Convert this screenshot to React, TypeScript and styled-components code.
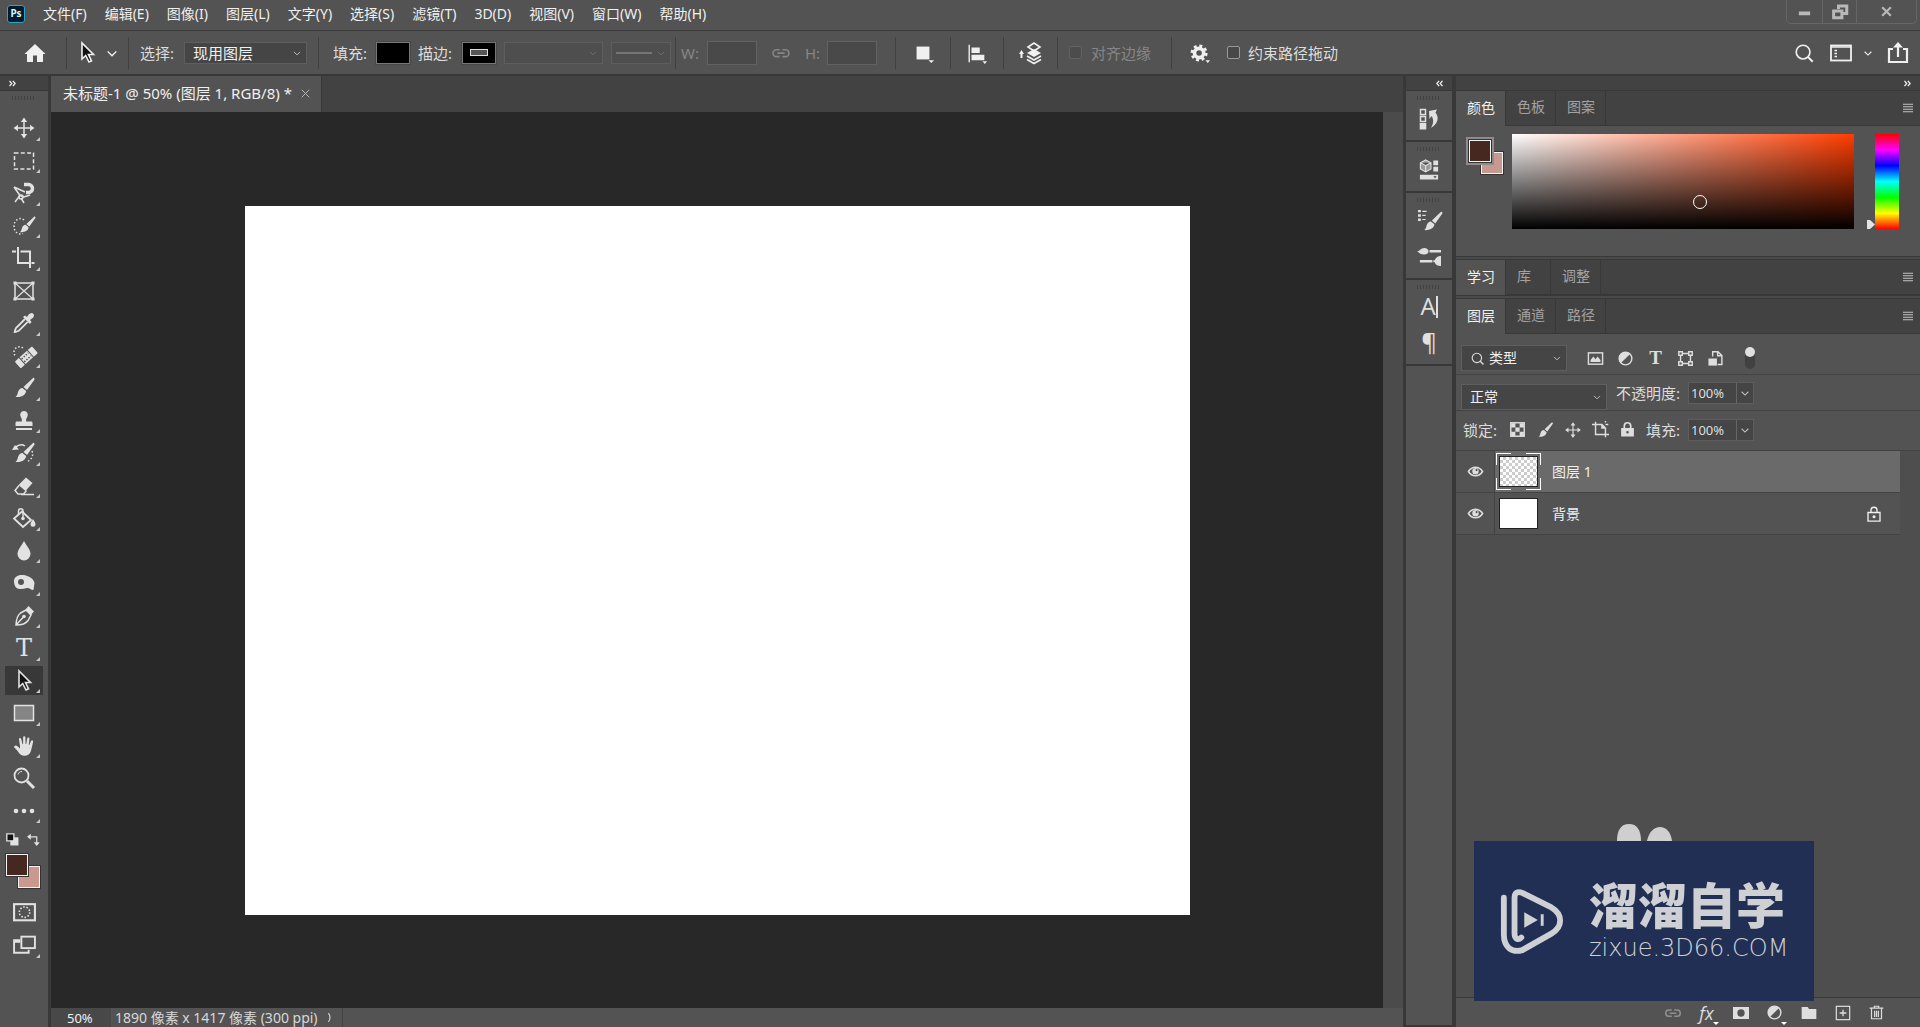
import React from "react";
import styled, { createGlobalStyle, css } from "styled-components";

const c = {
  bar: "#535353",
  dark: "#424242",
  field: "#454545",
  line: "#383838",
  canvas: "#282828",
  text: "#f0f0f0",
  soft: "#dcdcdc",
  dim: "#868686",
  fg: "#472820",
  bg: "#c9988e",
};

const Global = createGlobalStyle`
  * { box-sizing: border-box; }
  html, body, #root { height: 100%; }
  body {
    margin: 0;
    overflow: hidden;
    background: ${c.bar};
    color: ${c.text};
    font: 14px/20px "Noto Sans", "Noto Sans CJK SC", sans-serif;
  }
  button, input, select { font: inherit; color: inherit; margin: 0; padding: 0; border: 0; background: none; border-radius: 0; }
  button { display: inline-flex; align-items: center; justify-content: center; }
  svg { display: block; flex: none; }
`;

const Shell = styled.div`
  height: 100vh;
  display: flex;
  flex-direction: column;
`;

/* ---------- icons ---------- */

const Svg = styled.svg<{ $s?: number }>`
  width: ${(p) => p.$s ?? 24}px;
  height: ${(p) => p.$s ?? 24}px;
  fill: none;
  stroke: currentColor;
  stroke-width: 1.5;
  overflow: visible;
  .f { fill: currentColor; stroke: none; }
  .k { fill: #111; }
`;

const brush = (
  <>
    <path className="f" d="M22 2c.8.6.6 1.4.2 2L15 14l-3.500-3L20.500 2.400c.4-.5 1-.7 1.500-.4z" />
    <path className="f" d="M10.500 12l3.600 3c-.3 3.500-3.600 6.500-10.600 6 2-1.500 1.800-3 2.700-5.500.7-2 2.300-3.300 4.300-3.500z" />
  </>
);

const shapes: Record<string, React.ReactNode> = {
  move: (
    <>
      <path d="M12 4v16M4 12h16" />
      <path className="f" d="M12 1.500L15.200 6H8.800zM12 22.500L15.200 18H8.800zM1.500 12L6 8.800v6.400zM22.500 12L18 8.800v6.400z" />
    </>
  ),
  marquee: <rect x="2.500" y="4" width="19" height="16" strokeDasharray="4 2.300" />,
  lasso: (
    <>
      <path d="M2 6l6 8.500M2 6l11 5M8 14.500l4 1.500 6-2M8 14.500L3 21M9 17l3 5" />
      <circle cx="9" cy="16" r="2" />
      <path strokeWidth="3.500" d="M12 3.500h4.500a4 4 0 0 1 0 8H14" />
    </>
  ),
  quick: (
    <>
      <path strokeDasharray="1.500 2" d="M12 6C8 2.500 2 6 2 12s4 9 9 7.500" />
      <g transform="translate(5 1) scale(.82)">{brush}</g>
    </>
  ),
  crop: <path strokeWidth="2" d="M0 5.500h4M6 1v16h11M8.500 5.500h9.500V22M19.500 17h3" />,
  frame: (
    <>
      <rect x="3" y="4" width="18" height="16" />
      <path d="M3 4l18 16M21 4L3 20" strokeWidth="1.200" />
      <path className="f" d="M1.500 2.500h3v3h-3zM19.500 2.500h3v3h-3zM1.500 18.500h3v3h-3zM19.500 18.500h3v3h-3z" />
    </>
  ),
  dropper: (
    <>
      <path d="M13 8L4 17c-.6 1-1 2.500-1.300 4 1.600-.2 3-.6 4-1.200l9-9" strokeWidth="1.800" />
      <path className="f" d="M11 6l2-1.600 2 1.600c1-2 3-4.500 5-4 2 .5 2.500 2.500 1.500 4-.8 1.300-2.200 2-3.500 3l1.500 2-1.600 2z" />
    </>
  ),
  heal: (
    <>
      <path strokeDasharray="1.500 2" d="M11 4C7 1 2 4 2 8c0 2 1 4 2 5" />
      <g transform="rotate(-42 14 13)">
        <path className="f" d="M3.500 9h4.500v9H3.500a1 1 0 0 1-1-1v-7a1 1 0 0 1 1-1zM20 9h4.500a1 1 0 0 1 1 1v7a1 1 0 0 1-1 1H20z" />
        <rect className="f" x="9" y="9" width="10" height="9" />
        <path stroke={c.bar} strokeDasharray="1.400 1.400" d="M9.500 11.500h9M9.500 15.500h9" />
      </g>
    </>
  ),
  brush,
  stamp: (
    <path className="f" d="M12 2a4 4 0 0 1 3 6.500c-1 1.500-1 2.500-.8 4H19c1 0 1.500.6 1.500 1.500v3h-17v-3c0-.9.5-1.500 1.500-1.500h4.800c.2-1.500.2-2.500-.8-4A4 4 0 0 1 12 2zM4 19h16v2H4z" />
  ),
  history: (
    <>
      {brush}
      <path d="M3 7c3-3.500 7-4 10-2" />
      <path className="f" d="M0 9l3-5 4 4.500z" />
      <path strokeDasharray="1.500 2" d="M20 10c2 5-1 9-5 10.500" />
    </>
  ),
  eraser: (
    <>
      <path className="f" d="M14 3.500l6.500 5.500-7 8-7-6z" />
      <path d="M7 11.500L3 16.500l3 3.500h5.500l3-3.500M9 20.500h13" />
    </>
  ),
  bucket: (
    <>
      <path d="M10 5.500l9 8.500-8 7-9-8.500z" strokeWidth="1.800" />
      <path d="M11 13V5c0-3-4.500-3-4.500 0v4" />
      <circle className="f" cx="11" cy="12.500" r="1.800" />
      <path className="f" d="M21 13c1.500 2.500 2.500 4 2.500 5.200a2.500 2.500 0 0 1-5 0c0-1.200 1-2.700 2.500-5.200z" />
    </>
  ),
  blur: <path className="f" d="M12 2c3 5.500 6.500 9 6.500 13a6.500 6.500 0 0 1-13 0C5.500 11 9 7.500 12 2z" />,
  dodge: (
    <path
      className="f"
      fillRule="evenodd"
      d="M2 10c0-4 4-6.500 9-6 6 .5 11 4 11.500 8L21.500 19c-3 0-4-2.500-6.500-2-3 .8-6.500 1.500-9.500.5C3 16.500 2 13 2 10zM9 8a3 3 0 1 0 0 6 3 3 0 0 0 0-6z"
    />
  ),
  pen: (
    <>
      <path d="M4 21c.3-6 1.700-10 4.500-12L14 6l5 5-3 5.500C14 19.500 10 21 4 21zM4 21l7.500-8" />
      <circle className="f" cx="12" cy="12.500" r="1.800" />
      <path className="f" d="M13.500 5.500l3-3.500L22 7.500l-3 3.500z" />
    </>
  ),
  select: <path className="k" strokeWidth="1.600" d="M7 2v16l3.700-3.500L14 21l2.500-1.200-3-6.300h5z" />,
  shape: <rect x="2.500" y="4.500" width="19" height="15" fill="#858585" />,
  hand: (
    <path className="f" d="M8 12L7 5.500c-.2-1.600 1.800-2 2.200-.4L10.500 10h.6V3.500c0-1.700 2.200-1.700 2.300 0L13.600 10h.6l1-5.500c.3-1.500 2.300-1.200 2.200.4L16.800 11h.5l1.700-4c.6-1.300 2.400-.7 2.100.8-.7 3-1.200 6-2.100 9-1 3.500-3.200 5-6.500 5-3 0-4.700-1.300-6-3.500-1.200-2-2.500-3.400-4-4.600-1.200-1.200.4-2.600 2-2 1.400.5 2.500 1.700 3.500 2.800z" />
  ),
  zoom: (
    <>
      <circle cx="9.500" cy="9.500" r="7" strokeWidth="1.800" />
      <path strokeWidth="1" d="M6 8.500c.6-2 2-3 4-3" />
      <path d="M15 15l7 7" strokeWidth="3" />
    </>
  ),
  dots: (
    <g className="f">
      <circle cx="4" cy="12" r="2.300" />
      <circle cx="12" cy="12" r="2.300" />
      <circle cx="20" cy="12" r="2.300" />
    </g>
  ),
  mask: (
    <>
      <rect x="2" y="4" width="20" height="15.500" strokeWidth="2" />
      <circle cx="12" cy="11.700" r="5" strokeDasharray="1.500 1.600" />
    </>
  ),
  screen: (
    <>
      <path d="M8 7H2v12h14v-3M2 8.500h6" strokeWidth="1.800" />
      <rect x="9" y="3.500" width="13" height="11" strokeWidth="1.800" />
    </>
  ),
  home: <path className="f" d="M12 3l10.500 10H20v8h-6v-6.500h-4V21H4v-8H1.500z" />,
  chevron: <path d="M8 10.500l4 4 4-4" strokeWidth="1.300" />,
  link: <path d="M10.500 8.500H7a3.700 3.700 0 0 0 0 7.400h3.500M13.500 8.500H17a3.700 3.700 0 0 1 0 7.400h-3.500M8 12.200h8" strokeWidth="1.800" />,
  square: (
    <>
      <rect className="f" x="5" y="5" width="14" height="14" />
      <path className="f" d="M18 20h6l-3 3z" />
    </>
  ),
  align: (
    <>
      <path d="M3.500 3v19" />
      <path className="f" d="M6 6h9v6H6zM6 14h14v6H6zM18 21h5l-2.500 3z" />
    </>
  ),
  arrange: (
    <>
      <path className="f" d="M0 13l2.500-4L5 13H3.500v4h-2v-4zM8 12l7-4 7 4-7 4z" />
      <path d="M9 6l6-4 6 4-6 4zM8 15l7 4 7-4M8 18.500l7 4 7-4" strokeWidth="1.600" />
    </>
  ),
  gear: (
    <>
      <circle cx="11" cy="12" r="5" strokeWidth="4" />
      <circle cx="11" cy="12" r="7.800" strokeWidth="3" strokeDasharray="3.200 2.930" />
      <path className="f" d="M18 20h5l-2.500 3z" />
    </>
  ),
  search: (
    <>
      <circle cx="11" cy="11" r="7.500" strokeWidth="1.800" />
      <path d="M16.500 16.500l5 5" strokeWidth="2.200" />
    </>
  ),
  workspace: (
    <>
      <rect x="2" y="4.500" width="20" height="15" strokeWidth="1.800" />
      <path d="M2 6h20M5.500 9.500h2.500M5.500 12.500h2.500M5.500 15.500h2.500" strokeWidth="1.500" />
    </>
  ),
  share: (
    <>
      <path d="M7 8H3v13h18V8h-4M12 16V5" strokeWidth="2.200" />
      <path className="f" d="M12 1l5 5.500H7z" />
    </>
  ),
  historyPanel: (
    <>
      <path d="M3.500 2.500h5v5h-5zM3.500 9.500h5v5h-5z" />
      <path className="f" d="M2.700 16h6.600v6.500H2.700zM12 4l8-1.500-1.500 3c4 5 2.500 11-4.500 15.500 2.500-4.500 3-8.500.5-12L12.500 12z" />
    </>
  ),
  props3d: (
    <>
      <path fill="#9a9a9a" strokeWidth="1.200" d="M8 2l5.500 3v6.500L8 14.500l-5.500-3V5zM2.500 5L8 8l5.500-3M8 8v6.500" />
      <path className="f" d="M16 2.500h5v5h-5zM16 9h5v5h-5zM2 17.500h19v5H2z" />
      <path fill={c.dark} stroke="none" d="M16 19h3.500l-1.700 2z" />
    </>
  ),
  brushes: (
    <>
      <g transform="translate(3 1)">{brush}</g>
      <path className="f" d="M0 1h3v2.500H0zM0 5.500h3V8H0zM0 10h3v2.500H0z" />
      <path d="M4.500 2.500H9M4.500 6.700H8M4.500 11H8" strokeWidth="1.200" />
    </>
  ),
  brushSet: (
    <>
      <path className="f" d="M-1 6.500c3-.2 4-3.500 7.500-3.500C9 3 11 4.500 11 6.500S9 10 6.500 10C3 10 1.500 8.500-1 6.500zM24 11.500v10.500c-4 0-6-1.500-6.500-4H16v-2h1.500c.5-2.500 3-4.500 6.500-4.500z" />
      <path d="M12 6.500h12M2 17h13" strokeWidth="2.600" />
    </>
  ),
  image: (
    <>
      <rect x="2" y="4" width="20" height="16" strokeWidth="2" />
      <path className="f" d="M5 17v-3l4-5 3 4 3-4 4 5v3z" />
    </>
  ),
  adjust: (
    <>
      <circle cx="12" cy="12" r="9" strokeWidth="2" />
      <path className="f" d="M18.500 5.500a9 9 0 0 0-13 13z" />
    </>
  ),
  vector: (
    <>
      <path d="M5 5h14v14H5z" strokeWidth="2" />
      <path fill={c.bar} strokeWidth="2" d="M2.500 2.500h5v5h-5zM16.500 2.500h5v5h-5zM2.500 16.500h5v5h-5zM16.500 16.500h5v5h-5z" />
    </>
  ),
  smart: (
    <>
      <path d="M8 9V2.500h7.500l5.500 5.500v12.500h-6M15 2.500V8h6" strokeWidth="2" />
      <path className="f" d="M2 12h12v10H2z" />
    </>
  ),
  checker: (
    <>
      <rect x="2.500" y="2.500" width="19" height="19" strokeWidth="2" />
      <path className="f" d="M3 3h6v6H3zM15 3h6v6h-6zM9 9h6v6H9zM3 15h6v6H3zM15 15h6v6h-6z" />
    </>
  ),
  artboard: (
    <>
      <path d="M5 1v18h19M0 5h14l5 5v13M19 5h4M19 0v2" strokeWidth="2" />
      <path className="f" d="M13 4v7h7z" />
    </>
  ),
  lock: (
    <>
      <path d="M7.500 10V7a4.500 4.500 0 0 1 9 0v3" strokeWidth="2.400" />
      <path className="f" fillRule="evenodd" d="M3 10h18v12H3zM12 14.200a1.800 1.800 0 1 0 0 3.600 1.800 1.800 0 0 0 0-3.600z" />
    </>
  ),
  lockOutline: (
    <>
      <path d="M8 9.500V7a4 4 0 0 1 8 0v2.500M4 10h16v11.500H4z" strokeWidth="1.800" />
      <circle className="f" cx="12" cy="15.700" r="2" />
    </>
  ),
  eye: (
    <>
      <path d="M2 12c5-8 15-8 20 0-5 8-15 8-20 0z" strokeWidth="2.200" />
      <circle className="f" cx="12" cy="11.500" r="4.500" />
      <circle cx="13.500" cy="10" r="1.500" fill={c.bar} stroke="none" />
    </>
  ),
  maskAdd: <path className="f" fillRule="evenodd" d="M0 3h24v18H0zM12 6.500a5.500 5.500 0 1 0 0 11 5.500 5.500 0 0 0 0-11z" />,
  folder: <path className="f" d="M1 3h9l2 3h11v15H1z" />,
  add: (
    <>
      <rect x="2" y="2" width="20" height="20" strokeWidth="1.800" />
      <path d="M12 7v10M7 12h10" strokeWidth="2" />
    </>
  ),
  trash: <path d="M1 5h22M8.500 5V2h7v3M4 5v17h16V5M9 9v10M12 9v10M15 9v10" strokeWidth="1.900" />,
  menu: <path d="M2 4.500h20M2 9.500h20M2 14.500h20M2 19.500h20" strokeWidth="2" />,
  swap: (
    <>
      <path d="M6 7h12v11" strokeWidth="2.200" />
      <path className="f" d="M0 7l7-5.500v11zM18 24l-5.500-7h11z" />
    </>
  ),
  defaults: (
    <>
      <path className="f" d="M8 8h15v15H8z" />
      <path className="k" d="M1.500 1.500h13v13h-13z" strokeWidth="2.500" />
    </>
  ),
  min: <path d="M3 15h18" strokeWidth="6" />,
  restore: <path d="M10 8V4h11v10h-5M3.500 10.500h11v9h-11z" strokeWidth="4" />,
  close: <path d="M4 4l16 16M20 4L4 20" strokeWidth="4" />,
  tabClose: <path d="M2 2l20 20M22 2L2 22" strokeWidth="2.500" />,
  more: <path d="M8 4c4 4 4 12 0 16" strokeWidth="2" />,
  left: <path d="M11 5l-6 7 6 7M20 5l-6 7 6 7" strokeWidth="3.500" />,
  right: <path d="M4 5l6 7-6 7M13 5l6 7-6 7" strokeWidth="3.500" />,
};

const Icon = ({ n, s }: { n: string; s?: number }) => (
  <Svg viewBox="0 0 24 24" $s={s} aria-hidden="true">
    {shapes[n]}
  </Svg>
);

/* ---------- menu bar ---------- */

const MenuBar = styled.header`
  height: 31px;
  display: flex;
  align-items: stretch;
  border-bottom: 1px solid ${c.line};
  flex: none;
`;
const Logo = styled.div`
  width: 18px;
  height: 18px;
  margin: 5px 9px 0 7px;
  border: 1px solid #2fa3c4;
  border-radius: 3px;
  background: #001d2e;
  color: #d9f3ff;
  font: bold 10px/15px "Noto Sans", sans-serif;
  text-align: center;
`;
const Menus = styled.nav`
  display: flex;
  flex: 1;
  padding-bottom: 2px;
`;
const MenuButton = styled.button`
  padding: 0 9px;
  font-size: 14px;
`;
const WindowButtons = styled.div`
  display: flex;
  height: 24px;
  margin-right: 3px;
  color: #b8b8b8;
  border: 1px solid #666;
  border-top: 0;
  border-radius: 0 0 5px 5px;
`;
const WindowButton = styled.button<{ $w: number }>`
  width: ${(p) => p.$w}px;
  & + & { border-left: 1px solid #666; }
`;

/* ---------- options bar ---------- */

const Options = styled.div`
  height: 45px;
  padding-left: 1px;
  display: flex;
  align-items: center;
  border-bottom: 2px solid ${c.line};
  font-size: 15px;
  flex: none;
`;
const Group = styled.div<{ $w?: number; $pad?: number; $last?: boolean }>`
  height: 32px;
  min-width: ${(p) => p.$w ?? 0}px;
  padding-left: ${(p) => p.$pad ?? 0}px;
  display: flex;
  align-items: center;
  ${(p) => (p.$pad === undefined ? "justify-content: center;" : "")}
  border-right: ${(p) => (p.$last ? 0 : 1)}px solid #414141;
`;
const Label = styled.label<{ $dim?: boolean; $w?: number }>`
  ${(p) => (p.$w ? `width: ${p.$w}px;` : "")}
  color: ${(p) => (p.$dim ? c.dim : c.soft)};
  white-space: nowrap;
  font-size: 15px;
`;
const SelectWrap = styled.span<{ $w: number; $h: number; $off?: boolean; $low?: boolean }>`
  display: inline-grid;
  width: ${(p) => p.$w}px;
  height: ${(p) => p.$h}px;
  background: ${(p) => (p.$off ? "#4e4e4e" : c.field)};
  border: 1px solid #5e5e5e;
  color: ${(p) => (p.$off ? c.dim : c.text)};
  align-items: center;
  ${(p) => (p.$low ? "align-self: flex-end;" : "")}
  select, > svg, > i { grid-area: 1 / 1; }
  > svg { justify-self: end; pointer-events: none; color: ${(p) => (p.$off ? "#707070" : "#bdbdbd")}; }
`;
const Select = styled.select<{ $pad: number }>`
  appearance: none;
  width: 100%;
  height: 100%;
  padding-left: ${(p) => p.$pad}px;
  outline: 0;
  opacity: 1;
`;
const StrokeLine = styled.i`
  height: 2px;
  margin: 0 18px 0 4px;
  background: #757575;
`;
const PaintButton = styled.button`
  width: 34px;
  height: 22px;
  background: #000;
  border: 1px solid #777;
  outline: 1px solid #484848;
  span { width: 18px; height: 7px; border: 1px solid #ddd; background: #555; }
`;
const SizeInput = styled.input`
  width: 50px;
  height: 24px;
  background: #494949;
  border: 1px solid #626262;
`;
const Tick = styled.input<{ $off?: boolean }>`
  appearance: none;
  width: 13px;
  height: 13px;
  border: 1px solid ${(p) => (p.$off ? "#626262" : "#9a9a9a")};
  border-radius: 2px;
  background: ${(p) => (p.$off ? "#4c4c4c" : "#484848")};
`;
const Row = styled.div<{ $gap?: number }>`
  display: flex;
  align-items: center;
  gap: ${(p) => p.$gap ?? 0}px;
`;
const Dim = styled.span`
  color: ${c.dim};
`;
const RightTools = styled.div`
  display: flex;
  align-items: center;
  gap: 8px;
  margin: 0 10px 0 auto;
`;

/* ---------- workspace ---------- */

const Work = styled.div`
  flex: 1;
  min-height: 0;
  display: flex;
  background: ${c.line};
`;
const Column = styled.aside<{ $w: number }>`
  width: ${(p) => p.$w}px;
  display: flex;
  flex-direction: column;
  flex: none;
`;
const Collapse = styled.div<{ $side: "left" | "right" }>`
  height: 14px;
  margin-bottom: 1px;
  padding: 0 8px;
  background: ${c.dark};
  display: flex;
  align-items: center;
  justify-content: ${(p) => (p.$side === "left" ? "flex-start" : "flex-end")};
`;
const Grip = styled.div`
  width: 24px;
  height: 4px;
  margin: 5px auto 0;
  background: repeating-linear-gradient(90deg, #424242 0 1px, transparent 1px 3px);
`;
const ToolPanel = styled.div`
  flex: 1;
  background: ${c.bar};
  display: flex;
  flex-direction: column;
`;
const ToolList = styled.div`
  margin-top: 12px;
  height: 715px;
  display: grid;
  grid-template-rows: repeat(22, 1fr);
  align-items: center;
  padding-left: 5px;
`;
const ToolButton = styled.button<{ $on?: boolean; $plain?: boolean }>`
  width: 38px;
  height: 29px;
  position: relative;
  color: #e2e2e2;
  background: ${(p) => (p.$on ? "#383838" : "transparent")};
  ${(p) =>
    p.$plain
      ? ""
      : css`
          &::after {
            content: "";
            position: absolute;
            right: 3px;
            bottom: 2px;
            border: 2px solid transparent;
            border-right-color: #c8c8c8;
            border-bottom-color: #c8c8c8;
          }
        `}
`;
const TypeGlyph = styled.span`
  font: 24px/26px "DejaVu Serif", serif;
`;
const MiniRow = styled.div`
  display: flex;
  justify-content: space-between;
  padding: 6px 8px 0 6px;
  color: #e2e2e2;
  height: 27px;
`;
const Swatches = styled.div<{ $ring?: boolean }>`
  display: grid;
  width: 34px;
  height: 34px;
  margin: ${(p) => (p.$ring ? "0" : "0 0 0 6px")};
  button { grid-area: 1 / 1; width: 22px; height: 22px; border: 1px solid #f4f4f4; outline: 1px solid #333; }
  button:first-child { background: ${c.bg}; place-self: end; }
  button:last-child {
    background: ${c.fg};
    place-self: start;
    box-shadow: 0 0 0 ${(p) => (p.$ring ? "3px #8c8c8c" : "1px #2c2c2c")};
  }
`;
const ModeButtons = styled.div`
  display: flex;
  flex-direction: column;
  gap: 4px;
  padding: 10px 0 0 5px;
`;

const Doc = styled.main`
  flex: 1;
  min-width: 0;
  display: flex;
  flex-direction: column;
  margin: 0 3px;
  background: #4b4b4b;
`;
const TabStrip = styled.div`
  height: 36px;
  background: ${c.dark};
  display: flex;
  flex: none;
`;
const DocTab = styled.div`
  display: flex;
  align-items: center;
  gap: 9px;
  padding: 0 11px 2px 12px;
  background: ${c.bar};
  border-right: 1px solid ${c.line};
  color: #bbb;
  h1 { margin: 0; font: inherit; font-size: 15px; color: ${c.text}; }
`;
const Stage = styled.div`
  flex: 1;
  margin-right: 20px;
  background: ${c.canvas};
  display: grid;
  place-items: center;
`;
const Sheet = styled.div`
  width: 945px;
  height: 709px;
  background: #fff;
`;
const Status = styled.footer`
  height: 19px;
  display: flex;
  align-items: center;
  line-height: 18px;
  background: ${c.bar};
`;
const ZoomInput = styled.input`
  width: 60px;
  height: 19px;
  padding-left: 16px;
  background: #484848;
  font-size: 13px;
`;
const DocSize = styled.button`
  gap: 6px;
  height: 19px;
  padding: 0 5px 0 4px;
  color: #d8d8d8;
  border-right: 1px solid #444;
`;

const StripSection = styled.section<{ $h?: number }>`
  ${(p) => (p.$h ? `height: ${p.$h}px;` : "flex: 1;")}
  background: ${c.bar};
  border-bottom: 2px solid ${c.line};
  display: flex;
  flex-direction: column;
  align-items: center;
`;
const StripButton = styled.button`
  height: 35px;
  margin-top: 1px;
  color: #e0e0e0;
`;
const StripGlyph = styled.span`
  font: 24px/24px "Open Sans", sans-serif;
  display: flex;
  padding-bottom: 3px;
  i { width: 2px; height: 22px; margin-top: 2px; background: currentColor; }
`;

/* ---------- panels ---------- */

const PanelWrap = styled.div`
  margin-left: 4px;
  flex: 1;
  min-height: 0;
  display: flex;
  flex-direction: column;
`;
const Tabs = styled.div`
  height: 35px;
  background: ${c.dark};
  display: flex;
  flex: none;
  border-bottom: 1px solid ${c.line};
`;
const Tab = styled.button<{ $on?: boolean }>`
  min-width: 45px;
  padding: 0 10px 2px 11px;
  justify-content: flex-start;
  color: ${(p) => (p.$on ? c.text : "#a2a2a2")};
  background: ${(p) => (p.$on ? c.bar : "transparent")};
  border-right: 1px solid ${c.line};
  margin-bottom: ${(p) => (p.$on ? -1 : 0)}px;
`;
const TabMenu = styled.button`
  margin-left: auto;
  width: 24px;
  height: 33px;
  color: #c4c4c4;
`;
const ColorBody = styled.div`
  height: 130px;
  padding: 8px 21px 0 13px;
  background: ${c.bar};
  display: flex;
  align-items: flex-start;
`;
const SwatchBox = styled.div`
  padding-top: 6px;
`;
const Field = styled.div`
  flex: 1;
  height: 95px;
  margin: 0 13px 0 9px;
  position: relative;
  background: linear-gradient(transparent, #000), linear-gradient(90deg, #fff, #ff3c00);
`;
const Ring = styled.div`
  position: absolute;
  left: 53%;
  top: 64%;
  width: 14px;
  height: 14px;
  border: 1px solid #fff;
  border-radius: 50%;
`;
const Hue = styled.input`
  appearance: none;
  writing-mode: vertical-lr;
  width: 32px;
  height: 95px;
  background: linear-gradient(red, #f0f, #00f, #0ff, #0f0, #ff0, red) right / 24px 100% no-repeat;
  &::-webkit-slider-thumb {
    appearance: none;
    width: 32px;
    height: 9px;
    background: #e4e4e4;
    clip-path: polygon(0 0, 3px 0, 8px 50%, 3px 100%, 0 100%);
  }
`;
const Gap = styled.div`
  height: 4px;
  background: #4a4a4a;
  border-top: 1px solid ${c.line};
  border-bottom: 1px solid ${c.line};
`;
const LayerTool = styled.div<{ $h: number; $top?: number; $bottom?: number }>`
  height: ${(p) => p.$h}px;
  padding: ${(p) => p.$top ?? 0}px 5px ${(p) => p.$bottom ?? 0}px;
  background: ${c.bar};
  border-bottom: 1px solid #434343;
  display: flex;
  align-items: center;
`;
const FilterBox = styled(SelectWrap)`
  > svg:first-child { justify-self: start; margin-left: 8px; color: #ddd; }
`;
const Icons = styled.div<{ $gap: number; $left: number }>`
  display: flex;
  align-items: center;
  gap: ${(p) => p.$gap}px;
  margin-left: ${(p) => p.$left}px;
  color: #dedede;
`;
const Small = styled.span`
  width: 17px;
  text-align: center;
  font: bold 19px/20px "Liberation Serif", serif;
`;
const Toggle = styled.button`
  width: 10px;
  height: 22px;
  background: #414141;
  border-radius: 5px;
  align-items: flex-start;
  &::before { content: ""; width: 10px; height: 10px; border-radius: 50%; background: #e0e0e0; }
`;
const Percent = styled.span`
  display: flex;
  height: 22px;
  width: 66px;
  margin-left: 7px;
  background: ${c.field};
  border: 1px solid #5e5e5e;
  input { width: 47px; padding-left: 2px; font-size: 13px; }
  button { flex: 1; border-left: 1px solid #666; color: #bdbdbd; overflow: hidden; }
`;
const LayerArea = styled.div`
  flex: 1;
  min-height: 0;
  background: #4e4e4e;
  padding-right: 20px;
`;
const LayerList = styled.ul`
  margin: 0;
  padding: 0;
  list-style: none;
`;
const Layer = styled.li<{ $on?: boolean }>`
  height: 42px;
  display: flex;
  align-items: center;
  background: ${c.bar};
  border-bottom: 1px solid #434343;
  > button { width: 38px; height: 41px; color: #dedede; }
  > div {
    flex: 1;
    height: 41px;
    padding: 0 17px 0 1px;
    display: flex;
    align-items: center;
    gap: 11px;
    background: ${(p) => (p.$on ? "#6a6a6a" : "transparent")};
    border-left: 1px solid #434343;
  }
`;
const Thumb = styled.span<{ $clear?: boolean }>`
  width: 39px;
  height: 31px;
  margin: 2px;
  border: 1px solid #222;
  background: ${(p) => (p.$clear ? "repeating-conic-gradient(#ccc 0 25%, #fff 0 50%) 0 0 / 6px 6px" : "#fff")};
`;
const ThumbFrame = styled.span<{ $on?: boolean }>`
  display: flex;
  padding: 1px;
  --w: ${(p) => (p.$on ? "#fff" : "transparent")};
  background:
    linear-gradient(var(--w), var(--w)) 0 0 / 15px 1px, linear-gradient(var(--w), var(--w)) 0 0 / 1px 12px,
    linear-gradient(var(--w), var(--w)) 100% 0 / 15px 1px, linear-gradient(var(--w), var(--w)) 100% 0 / 1px 12px,
    linear-gradient(var(--w), var(--w)) 0 100% / 15px 1px, linear-gradient(var(--w), var(--w)) 0 100% / 1px 12px,
    linear-gradient(var(--w), var(--w)) 100% 100% / 15px 1px, linear-gradient(var(--w), var(--w)) 100% 100% / 1px 12px;
  background-repeat: no-repeat;
`;
const LayerName = styled.span`
  flex: 1;
`;
const PanelFoot = styled.div`
  height: 30px;
  padding-right: 31px;
  background: ${c.bar};
  border-top: 1px solid ${c.line};
  display: flex;
  justify-content: flex-end;
  align-items: center;
  gap: 9px;
  color: #dedede;
  button { width: 25px; height: 24px; position: relative; }
  button:first-child { color: #909090; }
`;
const Fx = styled.span`
  font: italic 18px/20px "Open Sans", sans-serif;
`;
const Drop = styled.i`
  position: absolute;
  right: 0;
  bottom: 0;
  border: 3px solid transparent;
  border-top-color: #fff;
  border-bottom: 0;
`;

/* ---------- floating badge ---------- */

const Badge = styled.div`
  position: fixed;
  right: 106px;
  bottom: 26px;
  width: 340px;
  height: 160px;
  padding: 0 25px;
  display: flex;
  align-items: center;
  gap: 24px;
  background: #212f55;
  color: #cfd0d3;
`;
const Ears = styled.svg`
  position: absolute;
  left: 142px;
  top: -18px;
  width: 58px;
  height: 18px;
  fill: #cfcfcf;
`;
const BadgeText = styled.div`
  strong { display: block; font: 900 49px/54px "Liberation Sans", "Noto Sans CJK SC", sans-serif; white-space: nowrap; }
  span { display: block; font: 200 24px/28px "DejaVu Sans", sans-serif; white-space: nowrap; }
`;

const menus = ["文件(F)", "编辑(E)", "图像(I)", "图层(L)", "文字(Y)", "选择(S)", "滤镜(T)", "3D(D)", "视图(V)", "窗口(W)", "帮助(H)"];
const tools = [
  "move", "marquee", "lasso", "quick", "crop", "frame", "dropper", "heal", "brush", "stamp", "history",
  "eraser", "bucket", "blur", "dodge", "pen", "type", "select", "shape", "hand", "zoom", "dots",
];

const PanelTabs = ({ names }: { names: string[] }) => (
  <Tabs role="tablist">
    {names.map((n, i) => (
      <Tab key={n} role="tab" aria-selected={i === 0} $on={i === 0}>
        {n}
      </Tab>
    ))}
    <TabMenu aria-label="menu">
      <Icon n="menu" s={12} />
    </TabMenu>
  </Tabs>
);

const PercentField = ({ id }: { id: string }) => (
  <Percent>
    <input id={id} defaultValue="100%" />
    <button aria-label="slider">
      <Icon n="chevron" s={20} />
    </button>
  </Percent>
);

function Panels() {
  return (
    <PanelWrap>
      <Collapse $side="right"><Icon n="right" s={9} /></Collapse>
      <PanelTabs names={["颜色", "色板", "图案"]} />
      <ColorBody>
        <SwatchBox>
          <Swatches $ring>
            <button aria-label="background" />
            <button aria-label="foreground" />
          </Swatches>
        </SwatchBox>
        <Field><Ring /></Field>
        <Hue type="range" defaultValue="100" aria-label="hue" />
      </ColorBody>
      <Gap />
      <PanelTabs names={["学习", "库", "调整"]} />
      <Gap />
      <PanelTabs names={["图层", "通道", "路径"]} />
      <LayerTool $h={41} $top={8}>
        <FilterBox $w={106} $h={26}>
          <Icon n="search" s={15} />
          <Select $pad={27} aria-label="filter"><option>类型</option></Select>
          <Icon n="chevron" s={18} />
        </FilterBox>
        <Icons $gap={13} $left={20}>
          <Icon n="image" s={17} />
          <Icon n="adjust" s={17} />
          <Small>T</Small>
          <Icon n="vector" s={17} />
          <Icon n="smart" s={17} />
        </Icons>
        <Icons $gap={0} $left={21}><Toggle aria-label="toggle filter" /></Icons>
      </LayerTool>
      <LayerTool $h={36}>
        <SelectWrap $w={146} $h={26} $low>
          <Select $pad={8} aria-label="blend"><option>正常</option></Select>
          <Icon n="chevron" s={18} />
        </SelectWrap>
        <Icons $gap={0} $left={9}>
          <Label htmlFor="opacity" $w={65}>不透明度:</Label>
          <PercentField id="opacity" />
        </Icons>
      </LayerTool>
      <LayerTool $h={40} $bottom={2}>
        <Icons $gap={0} $left={2}><Label as="span" $w={46}>锁定:</Label></Icons>
        <Icons $gap={10} $left={0}>
          <Icon n="checker" s={17} />
          <Icon n="brush" s={18} />
          <Icon n="move" s={18} />
          <Icon n="artboard" s={17} />
          <Icon n="lock" s={17} />
        </Icons>
        <Icons $gap={0} $left={10}>
          <Label htmlFor="fill" $w={35}>填充:</Label>
          <PercentField id="fill" />
        </Icons>
      </LayerTool>
      <LayerArea>
        <LayerList>
          <Layer $on>
            <button aria-label="visible"><Icon n="eye" s={17} /></button>
            <div><ThumbFrame $on><Thumb $clear /></ThumbFrame><LayerName>图层 1</LayerName></div>
          </Layer>
          <Layer>
            <button aria-label="visible"><Icon n="eye" s={17} /></button>
            <div><ThumbFrame><Thumb /></ThumbFrame><LayerName>背景</LayerName><Icon n="lockOutline" s={18} /></div>
          </Layer>
        </LayerList>
      </LayerArea>
      <PanelFoot>
        <button aria-label="link"><Icon n="link" s={20} /></button>
        <button><Fx>fx</Fx><Drop /></button>
        <button aria-label="mask"><Icon n="maskAdd" s={16} /></button>
        <button aria-label="adjustment"><Icon n="adjust" s={17} /><Drop /></button>
        <button aria-label="group"><Icon n="folder" s={16} /></button>
        <button aria-label="new"><Icon n="add" s={16} /></button>
        <button aria-label="delete"><Icon n="trash" s={15} /></button>
      </PanelFoot>
    </PanelWrap>
  );
}

export default function App() {
  return (
    <Shell>
      <Global />
      <MenuBar>
        <Logo>Ps</Logo>
        <Menus>
          {menus.map((m) => (
            <MenuButton key={m}>{m}</MenuButton>
          ))}
        </Menus>
        <WindowButtons>
          <WindowButton $w={35} aria-label="minimize"><Icon n="min" s={15} /></WindowButton>
          <WindowButton $w={34} aria-label="restore"><Icon n="restore" s={18} /></WindowButton>
          <WindowButton $w={60} aria-label="close"><Icon n="close" s={13} /></WindowButton>
        </WindowButtons>
      </MenuBar>

      <Options>
        <Group $w={66} $pad={22}><Icon n="home" /></Group>
        <Group $w={62} $pad={8}><Icon n="select" /><Icon n="chevron" s={26} /></Group>
        <Group $w={190} $pad={11}>
          <Label htmlFor="scope" $w={44}>选择:</Label>
          <SelectWrap $w={123} $h={22}>
            <Select id="scope" $pad={8}><option>现用图层</option></Select>
            <Icon n="chevron" s={18} />
          </SelectWrap>
        </Group>
        <Group $w={357} $pad={14}>
          <Label htmlFor="fillPaint" $w={43}>填充:</Label>
          <PaintButton id="fillPaint" />
          <Row $gap={8}>
            <span />
            <Label htmlFor="strokePaint" $w={36}>描边:</Label>
            <PaintButton id="strokePaint"><span /></PaintButton>
            <SelectWrap $w={99} $h={22} $off>
              <Select $pad={4} disabled aria-label="width" />
              <Icon n="chevron" s={18} />
            </SelectWrap>
            <SelectWrap $w={60} $h={22} $off>
              <Select $pad={4} disabled aria-label="line" />
              <StrokeLine />
              <Icon n="chevron" s={18} />
            </SelectWrap>
          </Row>
        </Group>
        <Group $w={220} $pad={5}>
          <Label htmlFor="w" $dim $w={26}>W:</Label>
          <SizeInput id="w" disabled />
          <Group $w={48} $last><Dim><Icon n="link" s={22} /></Dim></Group>
          <Label htmlFor="h" $dim $w={22}>H:</Label>
          <SizeInput id="h" disabled />
        </Group>
        <Group $w={55}><Icon n="square" s={22} /></Group>
        <Group $w={53}><Icon n="align" s={22} /></Group>
        <Group $w={54}><Icon n="arrange" /></Group>
        <Group $w={114} $pad={11}>
          <Row $gap={9}>
            <Tick type="checkbox" id="snap" disabled $off />
            <Label htmlFor="snap" $dim>对齐边缘</Label>
          </Row>
        </Group>
        <Group $pad={17} $last>
          <Row $gap={16}>
            <Icon n="gear" s={22} />
            <Row $gap={8}>
              <Tick type="checkbox" id="drag" />
              <Label htmlFor="drag">约束路径拖动</Label>
            </Row>
          </Row>
        </Group>
        <RightTools>
          <Row $gap={14}>
            <Icon n="search" s={22} />
            <Row $gap={5}>
              <Icon n="workspace" />
              <Icon n="chevron" s={20} />
            </Row>
          </Row>
          <Icon n="share" />
        </RightTools>
      </Options>

      <Work>
        <Column $w={48}>
          <Collapse $side="left"><Icon n="right" s={9} /></Collapse>
          <ToolPanel>
            <Grip />
            <ToolList>
              {tools.map((t) => (
                <ToolButton key={t} aria-label={t} $on={t === "select"} $plain={t === "zoom" || t === "frame"}>
                  {t === "type" ? <TypeGlyph>T</TypeGlyph> : <Icon n={t} />}
                </ToolButton>
              ))}
            </ToolList>
            <MiniRow>
              <Icon n="defaults" s={13} />
              <Icon n="swap" s={13} />
            </MiniRow>
            <Swatches>
              <button aria-label="background" />
              <button aria-label="foreground" />
            </Swatches>
            <ModeButtons>
              <ToolButton $plain aria-label="mask"><Icon n="mask" s={25} /></ToolButton>
              <ToolButton aria-label="screen"><Icon n="screen" s={25} /></ToolButton>
            </ModeButtons>
          </ToolPanel>
        </Column>

        <Doc>
          <TabStrip>
            <DocTab>
              <h1>未标题-1 @ 50% (图层 1, RGB/8) *</h1>
              <button aria-label="close"><Icon n="tabClose" s={9} /></button>
            </DocTab>
          </TabStrip>
          <Stage><Sheet /></Stage>
          <Status>
            <ZoomInput defaultValue="50%" aria-label="zoom" />
            <DocSize>1890 像素 x 1417 像素 (300 ppi) <Icon n="more" s={13} /></DocSize>
          </Status>
        </Doc>

        <Column $w={46}>
          <Collapse $side="right"><Icon n="left" s={9} /></Collapse>
          <StripSection $h={51}>
            <Grip />
            <StripButton aria-label="history"><Icon n="historyPanel" /></StripButton>
          </StripSection>
          <StripSection $h={51}>
            <Grip />
            <StripButton aria-label="properties"><Icon n="props3d" s={23} /></StripButton>
          </StripSection>
          <StripSection $h={87}>
            <Grip />
            <StripButton aria-label="brushes"><Icon n="brushes" s={23} /></StripButton>
            <StripButton aria-label="brush settings"><Icon n="brushSet" s={23} /></StripButton>
          </StripSection>
          <StripSection $h={86}>
            <Grip />
            <StripButton><StripGlyph>A<i /></StripGlyph></StripButton>
            <StripButton><StripGlyph>¶</StripGlyph></StripButton>
          </StripSection>
          <StripSection />
        </Column>

        <Column $w={468}>
          <Panels />
        </Column>
      </Work>

      <Badge>
        <Ears viewBox="0 0 58 18">
          <path d="M1 18C1 7 5 1 13 1s12 6 12 17zM31 18C33 9 38 4 44 4s11 5 12 14z" />
        </Ears>
        <Svg viewBox="0 0 66 68" $s={66}>
          <g strokeWidth="6" strokeLinecap="round" strokeLinejoin="round">
            <path d="M4 10v38c0 13 8 19 19 16l30-17c12-7 12-20 0-27L23 5c-5-2-8 0-8 5v37c0 6 4 7 7 4" />
          </g>
          <path className="f" d="M25 25l14 8-14 8z" />
          <path d="M43.500 27v12" strokeWidth="3" />
        </Svg>
        <BadgeText>
          <strong>溜溜自学</strong>
          <span>zixue.3D66.COM</span>
        </BadgeText>
      </Badge>
    </Shell>
  );
}
